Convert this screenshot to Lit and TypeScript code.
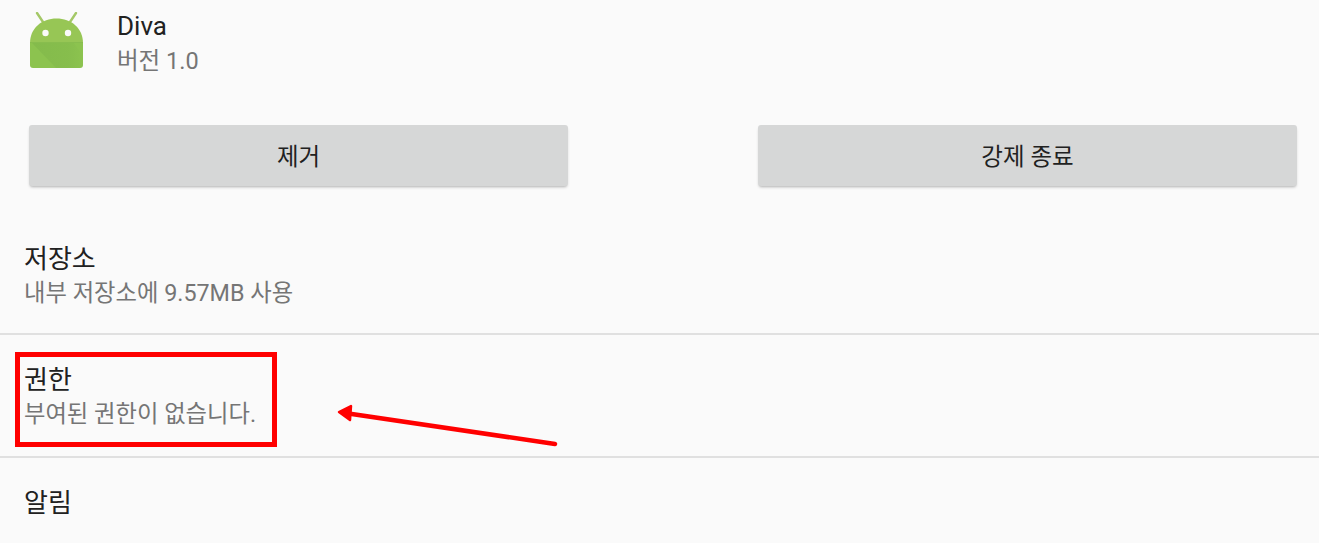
import { LitElement, html, css } from "lit";
import { customElement } from "lit/decorators.js";

@customElement("app-root")
export class AppRoot extends LitElement {
  static styles = css`
    :host {
      display: block;
      position: relative;
      width: 1319px;
      height: 543px;
      overflow: hidden;
      background: #fafafa;
      font-family: Roboto, "Noto Sans CJK KR", sans-serif;
      color: #212121;
    }
    .app {
      display: flex;
      align-items: flex-start;
      gap: 34px;
      height: 125px;
      padding: 12px 0 0 30px;
      box-sizing: border-box;
    }
    .icon {
      width: 53px;
      height: 57px;
      display: block;
      flex: none;
    }
    .name {
      font-size: 26px;
      line-height: 28px;
    }
    .ver {
      font-size: 23.5px;
      line-height: 34px;
      margin-top: 4px;
      color: #757575;
    }
    .buttons {
      display: flex;
      justify-content: space-between;
      padding: 0 22px 0 29px;
      height: 87px;
    }
    .btn {
      width: 539px;
      height: 61px;
      background: #d6d7d7;
      border-radius: 3px;
      box-shadow: 0 2px 3px -1px rgba(0, 0, 0, 0.3);
      display: flex;
      align-items: center;
      justify-content: center;
      font-size: 23.5px;
      padding-bottom: 2px;
      box-sizing: border-box;
    }
    .row {
      box-sizing: border-box;
      padding: 27px 0 0 24px;
      height: 123px;
      border-bottom: 2px solid #e0e0e0;
    }
    .row.first {
      padding-top: 29px;
    }
    .row.last {
      border-bottom: none;
    }
    .title {
      font-size: 26px;
      line-height: 36px;
    }
    .sub {
      font-size: 23.3px;
      line-height: 32px;
      color: #757575;
    }
    .box {
      position: absolute;
      left: 15px;
      top: 352px;
      width: 262px;
      height: 95px;
      box-sizing: border-box;
      border: 5px solid #ff0000;
    }
    .arrow {
      position: absolute;
      left: 0;
      top: 0;
      width: 1319px;
      height: 543px;
      pointer-events: none;
    }
  `;

  render() {
    return html`
      <div class="app">
        <svg class="icon" viewBox="0 0 53 57">
          <defs>
            <linearGradient id="fold" x1="0" y1="0" x2="1" y2="0">
              <stop offset="0" stop-color="#7cb348" stop-opacity="0.5"/>
              <stop offset="0.7" stop-color="#7cb348" stop-opacity="0.35"/>
              <stop offset="1" stop-color="#7cb348" stop-opacity="0"/>
            </linearGradient>
          </defs>
          <path d="M7 1 L13 10 M46 1 L40 10" stroke="#a4c867" stroke-width="2.4" stroke-linecap="round" fill="none"/>
          <path d="M0 31 C0 16 12 6.500 26.500 6.500 C41 6.500 53 16 53 31 Z" fill="#97c655"/>
          <path d="M0 30 H53 V53 Q53 56 50 56 H3 Q0 56 0 53 Z" fill="#8cc34f"/>
          <path d="M2 31 H44 L53 44 V56 H26 Z" fill="url(#fold)"/>
          <rect x="0" y="30" width="53" height="1" fill="#88bd4e"/>
          <circle cx="15.500" cy="21" r="3.200" fill="#fafafa"/>
          <circle cx="38" cy="21" r="3.200" fill="#fafafa"/>
        </svg>
        <div class="app-text">
          <div class="name">Diva</div>
          <div class="ver">버전 1.0</div>
        </div>
      </div>
      <div class="buttons">
        <div class="btn">제거</div>
        <div class="btn">강제 종료</div>
      </div>
      <div class="row first">
        <div class="title">저장소</div>
        <div class="sub">내부 저장소에 9.57MB 사용</div>
      </div>
      <div class="row second">
        <div class="title">권한</div>
        <div class="sub">부여된 권한이 없습니다.</div>
      </div>
      <div class="row last">
        <div class="title">알림</div>
      </div>
      <div class="box"></div>
      <svg class="arrow" viewBox="0 0 1319 543">
        <path d="M555 444 L345 413" stroke="#ff0000" stroke-width="4.500" stroke-linecap="round" fill="none"/>
        <path d="M351 406 L339 412 L350 420 Z" fill="#ff0000" stroke="#ff0000" stroke-width="2.500" stroke-linejoin="round"/>
      </svg>
    `;
  }
}
